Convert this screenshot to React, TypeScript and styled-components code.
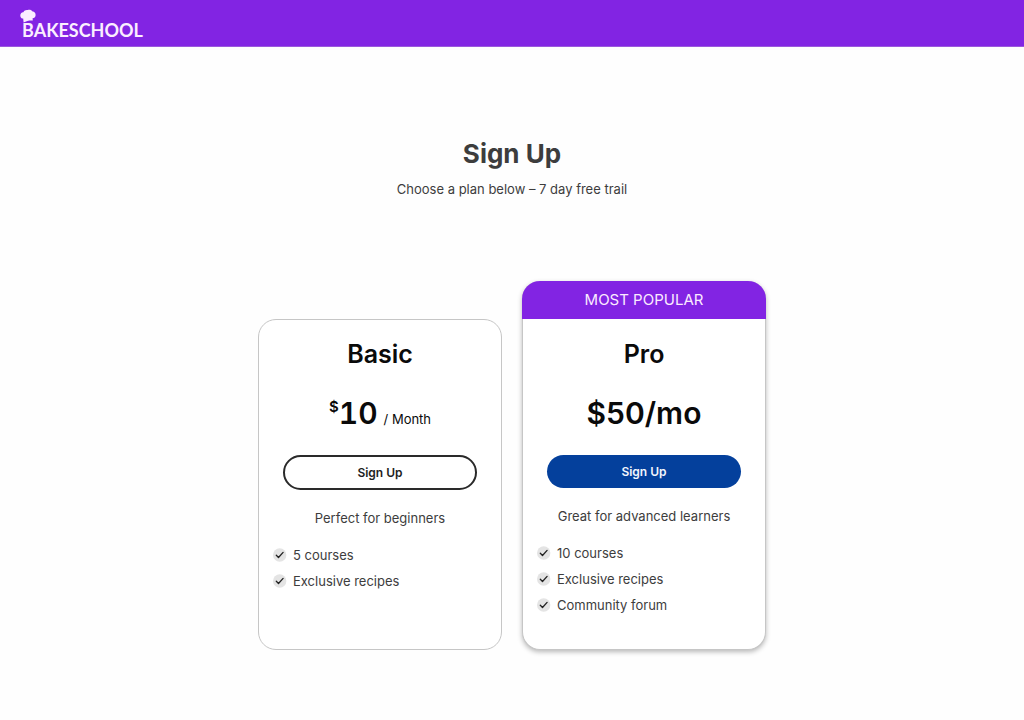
import React from "react";
import styled, { createGlobalStyle, css } from "styled-components";

const GlobalStyle = createGlobalStyle`
  *, *::before, *::after { box-sizing: border-box; }
  body {
    margin: 0;
    background: #fefefe;
    color: #3d3d3d;
    font-family: Inter, "Liberation Sans", sans-serif;
    font-size: 13px;
    line-height: 20px;
  }
  h1, h2, p, ul { margin: 0; padding: 0; }
`;

const Header = styled.header`
  display: flex;
  align-items: flex-start;
  height: 46px;
  padding: 9px 20px;
  background: #8224e3;
  box-shadow: 0 1px 0 #9a58dc;
`;

const Logo = styled.a`
  position: relative;
  padding: 10px 0 0 2px;
  color: #fbeeff;
  text-decoration: none;
  font-family: Lato, sans-serif;
  font-size: 18px;
  font-weight: 700;
  line-height: 22px;
`;

const Hat = styled.svg`
  position: absolute;
  top: 0;
  left: 0;
  width: 16px;
  height: 14px;
`;

const Main = styled.main`
  padding: 92px 20px 69px;
`;

const Intro = styled.section`
  text-align: center;
`;

const PageTitle = styled.h1`
  font-size: 26px;
  font-weight: 700;
  line-height: 32px;
`;

const Subtitle = styled.p`
  margin-top: 9px;
`;

const Plans = styled.section`
  display: flex;
  justify-content: center;
  gap: 20px;
  margin-top: 82px;
`;

const Card = styled.article<{ $featured?: boolean }>`
  flex: 0 1 244px;
  display: flex;
  flex-direction: column;
  border: 1px solid #c6c6c6;
  border-radius: 18px;
  background: #fff;
  ${(p) =>
    p.$featured
      ? css`
          border-top: 0;
          box-shadow: 0 2px 5px rgba(0, 0, 0, 0.28);
        `
      : css`
          margin-top: 38px;
        `}
`;

const Banner = styled.p`
  margin: 0 -1px;
  padding: 9px 0;
  border-radius: 18px 18px 0 0;
  background: #8224e3;
  color: #fbeaff;
  font-size: 15px;
  text-align: center;
`;

const CardBody = styled.div<{ $featured?: boolean }>`
  display: flex;
  flex-direction: column;
  padding: ${(p) => (p.$featured ? "19px" : "18px")} 14px 31px;
`;

const PlanName = styled.h2`
  color: #0a0a0a;
  font-size: 25px;
  font-weight: 600;
  line-height: 32px;
  text-align: center;
`;

const Price = styled.p`
  display: flex;
  justify-content: center;
  margin-top: 25px;
  color: #0a0a0a;
  font-size: 30px;
  font-weight: 600;
  line-height: 36px;
`;

const Amount = styled.span`
  font-variant-numeric: tabular-nums;
`;

const Currency = styled.span`
  font-size: 15px;
  line-height: 24px;
`;

const Period = styled.span`
  align-self: flex-end;
  margin-left: 6px;
  font-size: 13px;
  font-weight: 400;
  line-height: 24px;
`;

const SignUpButton = styled.button<{ $filled?: boolean }>`
  margin: 24px 10px 0;
  padding: ${(p) => (p.$filled ? "7px" : "6px")} 16px;
  border: ${(p) => (p.$filled ? "0" : "2px solid #2a2a2a")};
  border-radius: 18px;
  background: ${(p) => (p.$filled ? "#04409c" : "#fff")};
  color: ${(p) => (p.$filled ? "#f2f5fc" : "#1e1e1e")};
  font: 600 12px / 19px Inter, "Liberation Sans", sans-serif;
  cursor: pointer;
`;

const Tagline = styled.p`
  margin-top: 18px;
  text-align: center;
`;

const Features = styled.ul`
  margin-top: 14px;
  list-style: none;
`;

const Feature = styled.li`
  display: flex;
  align-items: center;
  gap: 6px;
  line-height: 26px;
`;

const CheckIcon = () => (
  <svg width="14" height="14" viewBox="0 0 14 14" aria-hidden="true">
    <circle cx="6.7" cy="7" r="6.7" fill="#e4e4e4" />
    <path
      d="M3.3 7.2 L5.5 9.5 L10.1 4.4"
      fill="none"
      stroke="#222"
      strokeWidth="1.3"
      strokeLinecap="round"
      strokeLinejoin="round"
    />
  </svg>
);

const FeatureList = ({ items }: { items: string[] }) => (
  <Features>
    {items.map((item) => (
      <Feature key={item}>
        <CheckIcon />
        {item}
      </Feature>
    ))}
  </Features>
);

export default function App() {
  return (
    <>
      <GlobalStyle />
      <Header>
        <Logo href="#">
          <Hat viewBox="0 0 16 14" aria-hidden="true">
            <path
              d="M3.6 13.6 L3.2 9.6 C1.4 9.6 0.3 8.2 0.3 6.4 C0.3 4.5 1.7 3.1 3.4 3.3 C4.1 1.6 5.8 0.8 7.7 1.1 C9.4 0.5 11.6 1 12.6 2.6 C14.6 2.7 15.8 4.3 15.6 6.2 C15.5 8 14.2 9.2 12.6 9.2 L12.8 11.6 C9.8 11.3 6.6 11.8 3.6 13.6 Z"
              fill="#fbeeff"
            />
          </Hat>
          BAKESCHOOL
        </Logo>
      </Header>
      <Main>
        <Intro>
          <PageTitle>Sign Up</PageTitle>
          <Subtitle>Choose a plan below – 7 day free trail</Subtitle>
        </Intro>
        <Plans>
          <Card>
            <CardBody>
              <PlanName>Basic</PlanName>
              <Price>
                <Currency>$</Currency>
                <Amount>10</Amount>
                <Period>/ Month</Period>
              </Price>
              <SignUpButton type="button">Sign Up</SignUpButton>
              <Tagline>Perfect for beginners</Tagline>
              <FeatureList items={["5 courses", "Exclusive recipes"]} />
            </CardBody>
          </Card>
          <Card $featured>
            <Banner>MOST POPULAR</Banner>
            <CardBody $featured>
              <PlanName>Pro</PlanName>
              <Price>$50/mo</Price>
              <SignUpButton type="button" $filled>
                Sign Up
              </SignUpButton>
              <Tagline>Great for advanced learners</Tagline>
              <FeatureList items={["10 courses", "Exclusive recipes", "Community forum"]} />
            </CardBody>
          </Card>
        </Plans>
      </Main>
    </>
  );
}
